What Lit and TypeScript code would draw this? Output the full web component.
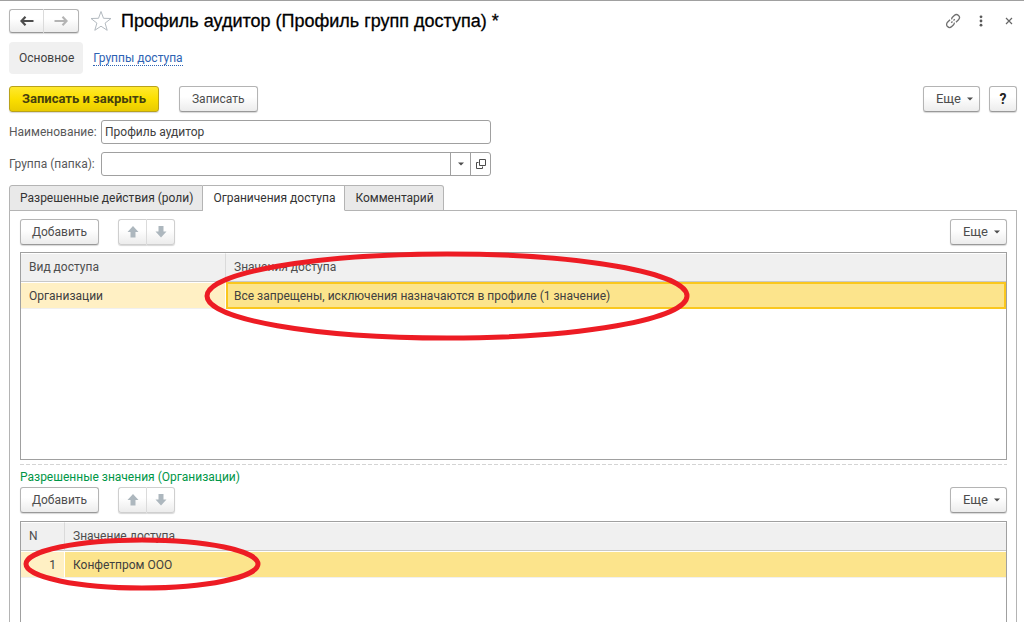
import { LitElement, html, css, svg } from "lit";
import { customElement, property } from "lit/decorators.js";

const controls = css`
  * {
    box-sizing: border-box;
  }
  button,
  input {
    font: inherit;
    color: inherit;
    margin: 0;
  }
  .btn {
    display: inline-flex;
    align-items: center;
    justify-content: center;
    height: 26px;
    padding: 0 12px;
    color: #4d4d4d;
    background: linear-gradient(#ffffff 40%, #ececec);
    border: 1px solid #b4b4b4;
    border-bottom-color: #999999;
    border-radius: 3px;
    box-shadow: 0 1px 1px #d8d8d8;
    white-space: nowrap;
  }
  .more {
    gap: 6px;
    padding: 0 6px 0 12px;
    font-size: 13px;
  }
  .pair {
    display: flex;
  }
  .pair .btn:first-child {
    border-radius: 3px 0 0 3px;
    border-right-color: #dcdcdc;
  }
  .pair .btn:last-child {
    border-radius: 0 3px 3px 0;
    border-left: 0;
  }
`;

const caret = svg`<svg width="6" height="4" viewBox="0 0 6 4" aria-hidden="true"><path d="M0 .5h6L3 3.5z" fill="#4d4d4d"/></svg>`;

@customElement("list-toolbar")
export class ListToolbar extends LitElement {
  static styles = [
    controls,
    css`
      :host {
        display: flex;
        align-items: center;
      }
      .add {
        padding: 0 11px;
      }
      .pair {
        margin: 0 auto 0 19px;
      }
      .pair .btn {
        width: 29px;
        padding: 0;
        border-color: #cfcfcf;
      }
      .pair .btn:last-child {
        width: 28px;
      }
    `,
  ];

  render() {
    return html`
      <button class="btn add" type="button">Добавить</button>
      <div class="pair">
        <button class="btn" type="button" aria-label="Переместить вверх">
          <svg width="12" height="12" viewBox="0 0 12 12"><path d="M6 0l5.500 6H8.500v5.500h-5V6H.5z" fill="#adb7be" /></svg>
        </button>
        <button class="btn" type="button" aria-label="Переместить вниз">
          <svg width="12" height="12" viewBox="0 0 12 12"><path d="M6 11.500L.5 5.500h3V0h5v5.500h3z" fill="#adb7be" /></svg>
        </button>
      </div>
      <button class="btn more" type="button">Еще ${caret}</button>
    `;
  }
}

@customElement("access-table")
export class AccessTable extends LitElement {
  @property({ attribute: false }) columns: string[] = [];
  @property({ attribute: false }) row: string[] = [];
  @property({ type: Boolean, reflect: true }) numbered = false;
  @property({ type: Boolean, reflect: true }) focused = false;

  static styles = css`
    :host {
      display: block;
      border: 1px solid #a0a0a0;
      background: #fff;
    }
    table {
      width: 100%;
      border-collapse: separate;
      border-spacing: 0;
      table-layout: fixed;
    }
    th,
    td {
      box-sizing: border-box;
      padding: 0 8px;
      text-align: left;
      font-weight: normal;
      white-space: nowrap;
      line-height: 16px;
    }
    th {
      height: 29px;
      padding-bottom: 2px;
      color: #4d4d4d;
      background: #f0f0f0;
      border-top: 1px solid #fff;
      border-bottom: 1px solid #c8c8c8;
    }
    th:first-child {
      width: 205px;
      border-right: 1px solid #dadada;
    }
    td {
      height: 27px;
      color: #404040;
      border-top: 1px solid #fff;
      border-bottom: 1px solid #f0f0f0;
    }
    td:first-child {
      background: #fff0c4;
      border-right: 1px solid #fff;
    }
    td:last-child {
      background: #fce48c;
    }
    :host([focused]) td:last-child {
      border: 2px solid #fac71e;
      padding: 0 6px;
    }
    :host([numbered]) th:first-child {
      width: 44px;
    }
    :host([numbered]) td:first-child {
      text-align: right;
    }
  `;

  render() {
    return html`
      <table>
        <thead>
          <tr>${this.columns.map((c) => html`<th scope="col">${c}</th>`)}</tr>
        </thead>
        <tbody>
          <tr>${this.row.map((c) => html`<td>${c}</td>`)}</tr>
        </tbody>
      </table>
    `;
  }
}

@customElement("app-root")
export class AppRoot extends LitElement {
  static styles = [
    controls,
    css`
      :host {
        display: flex;
        flex-direction: column;
        height: 100vh;
        overflow: hidden;
        box-sizing: border-box;
        padding: 7px 7px 0 9px;
        border-top: 1px solid #a0a0a0;
        background: #fff;
        color: #404040;
        font: 12px/16px Roboto, "Liberation Sans", sans-serif;
      }
      .head {
        display: flex;
        align-items: center;
        height: 25px;
      }
      .head .pair .btn {
        width: 35px;
        height: 24px;
        padding: 0;
      }
      .star {
        margin: 0 8px 0 10px;
      }
      h1 {
        flex: 1;
        margin: 0;
        color: #000;
        font: 18px/24px "Liberation Sans", Arial, sans-serif;
        -webkit-text-stroke: 0.3px #000;
      }
      .tools {
        display: flex;
        align-items: center;
        gap: 12px;
      }
      .tools button {
        display: flex;
        align-items: center;
        justify-content: center;
        width: 16px;
        height: 20px;
        padding: 0;
        border: 0;
        background: none;
      }
      .links {
        display: flex;
        align-items: center;
        gap: 10px;
        margin-top: 9px;
      }
      .current {
        padding: 8px 9px 8px 10px;
        border-radius: 4px;
        background: #f0f0f0;
      }
      a {
        color: #2d62b3;
        text-decoration: none;
        border-bottom: 1px dotted #2d62b3;
        line-height: 14px;
      }
      .commands {
        display: flex;
        align-items: center;
        margin-top: 12px;
      }
      .primary {
        margin-right: 20px;
        color: #45400f;
        font-size: 13px;
        font-weight: bold;
        background: linear-gradient(#ffe92e, #fbdf00 50%, #e9cb00);
        border-color: #b9a21a;
      }
      .commands .more {
        margin: 0 9px 0 auto;
      }
      .help {
        width: 28px;
        padding: 0;
        color: #222;
        font-weight: bold;
        font-size: 14px;
      }
      .form {
        display: grid;
        grid-template-columns: 92px minmax(0, 390px);
        align-items: center;
        row-gap: 8px;
        margin-top: 8px;
      }
      label {
        white-space: nowrap;
        color: #595959;
      }
      .field {
        display: flex;
        height: 24px;
        border: 1px solid #a0a0a0;
        border-radius: 3px;
        overflow: hidden;
        background: #fff;
      }
      .field input {
        flex: 1;
        min-width: 0;
        padding: 0 3px;
        border: 0;
        outline: 0;
        background: none;
      }
      .field button {
        display: flex;
        align-items: center;
        justify-content: center;
        width: 20px;
        padding: 0;
        border: 0;
        border-left: 1px solid #a0a0a0;
        background: none;
      }
      .tabs {
        display: flex;
        margin-top: 9px;
        position: relative;
        z-index: 1;
      }
      .tab {
        height: 26px;
        padding: 0 9px 0 10px;
        margin-bottom: -1px;
        border: 1px solid #b4b4b4;
        border-left-width: 0;
        background: #e9e9e9;
        color: #333;
        white-space: nowrap;
      }
      .tab:first-child {
        border-left-width: 1px;
        border-radius: 3px 0 0 0;
      }
      .tab:last-child {
        border-radius: 0 3px 0 0;
      }
      .tab.active {
        background: #fff;
        border-bottom-color: #fff;
      }
      .panel {
        position: relative;
        flex: 1;
        display: flex;
        flex-direction: column;
        min-height: 0;
        padding: 8px 9px 0 10px;
        border: 1px solid #b4b4b4;
        border-bottom: 0;
      }
      .upper {
        flex: none;
        height: 208px;
        margin-top: 7px;
      }
      .split {
        height: 1px;
        margin: 4px 0;
        background: repeating-linear-gradient(90deg, #d4d4d4 0 4px, #fff 4px 6px);
      }
      h2 {
        margin: 0 0 2px;
        color: #009646;
        font: inherit;
      }
      .lower {
        flex: 1;
        margin-top: 8px;
        border-bottom: 0;
      }
      .mark {
        position: absolute;
        pointer-events: none;
      }
      .mark-upper {
        left: 194px;
        top: 39px;
      }
      .mark-lower {
        left: 12px;
        top: 325px;
      }
    `,
  ];

  render() {
    return html`
      <header class="head">
        <div class="pair">
          <button class="btn" type="button" aria-label="Назад">
            <svg width="14" height="10" viewBox="0 0 14 10"><path d="M5.500 .8L1.500 5l4 4.200M2 5h11.500" fill="none" stroke="#4d4d4d" stroke-width="2.200" /></svg>
          </button>
          <button class="btn" type="button" aria-label="Вперед">
            <svg width="14" height="10" viewBox="0 0 14 10"><path d="M8.500 .8L12.500 5l-4 4.200M12 5H.5" fill="none" stroke="#b4b4b4" stroke-width="2.200" /></svg>
          </button>
        </div>
        <svg class="star" width="24" height="22" viewBox="0 0 24 22" aria-hidden="true">
          <path d="M12 1.500l2.500 6.800 7.500.2-5.900 4.600 2.100 7.200L12 16.200l-6.200 4.100 2.100-7.200L2 8.500l7.500-.2z" fill="#fff" stroke="#b3bac0" />
        </svg>
        <h1>Профиль аудитор (Профиль групп доступа) *</h1>
        <div class="tools">
          <button type="button" aria-label="Ссылка">
            <svg width="16" height="16" viewBox="0 0 16 16"><g transform="rotate(-45 8 8)" fill="none" stroke="#707070" stroke-width="1.300"><path d="M6.800 5H3.200a3 3 0 0 0 0 6h2.600a2.800 2.800 0 0 0 2-.9M9.200 11h3.600a3 3 0 0 0 0-6h-2.600a2.800 2.800 0 0 0-2 .9M5.500 8h1.800M8.700 8h1.800" /></g></svg>
          </button>
          <button type="button" aria-label="Меню">
            <svg width="4" height="12" viewBox="0 0 4 12" fill="#5a5a5a"><circle cx="2" cy="1.800" r="1.400" /><circle cx="2" cy="6" r="1.400" /><circle cx="2" cy="10.200" r="1.400" /></svg>
          </button>
          <button type="button" aria-label="Закрыть">
            <svg width="8" height="8" viewBox="0 0 8 8"><path d="M1 1l6 6M7 1L1 7" stroke="#666" stroke-width="1.200" /></svg>
          </button>
        </div>
      </header>

      <nav class="links">
        <span class="current">Основное</span>
        <a href="#groups">Группы доступа</a>
      </nav>

      <div class="commands">
        <button class="btn primary" type="button">Записать и закрыть</button>
        <button class="btn" type="button">Записать</button>
        <button class="btn more" type="button">Еще ${caret}</button>
        <button class="btn help" type="button">?</button>
      </div>

      <div class="form">
        <label for="name">Наименование:</label>
        <div class="field"><input id="name" type="text" value="Профиль аудитор" /></div>
        <label for="group">Группа (папка):</label>
        <div class="field">
          <input id="group" type="text" />
          <button type="button" aria-label="Выбрать">${caret}</button>
          <button type="button" aria-label="Открыть">
            <svg width="10" height="10" viewBox="0 0 10 10" fill="none" stroke="#4d4d4d"><path d="M3.500 .5h6v6h-6zM2.500 3.500h-2v6h6v-2" /></svg>
          </button>
        </div>
      </div>

      <div class="tabs" role="tablist">
        <button class="tab" role="tab" type="button">Разрешенные действия (роли)</button>
        <button class="tab active" role="tab" type="button" aria-selected="true">Ограничения доступа</button>
        <button class="tab" role="tab" type="button">Комментарий</button>
      </div>

      <section class="panel">
        <list-toolbar></list-toolbar>
        <access-table
          class="upper"
          focused
          .columns=${["Вид доступа", "Значения доступа"]}
          .row=${["Организации", "Все запрещены, исключения назначаются в профиле (1 значение)"]}
        ></access-table>
        <div class="split"></div>
        <h2>Разрешенные значения (Организации)</h2>
        <list-toolbar></list-toolbar>
        <access-table
          class="lower"
          numbered
          .columns=${["N", "Значение доступа"]}
          .row=${["1", "Конфетпром ООО"]}
        ></access-table>

        <svg class="mark mark-upper" width="486" height="92" viewBox="0 0 486 92" aria-hidden="true">
          <ellipse cx="243" cy="46" rx="240" ry="42" fill="none" stroke="#ed1c24" stroke-width="5" />
        </svg>
        <svg class="mark mark-lower" width="240" height="56" viewBox="0 0 240 56" aria-hidden="true">
          <ellipse cx="120" cy="28" rx="116" ry="24" fill="none" stroke="#ed1c24" stroke-width="5" />
        </svg>
      </section>
    `;
  }
}
